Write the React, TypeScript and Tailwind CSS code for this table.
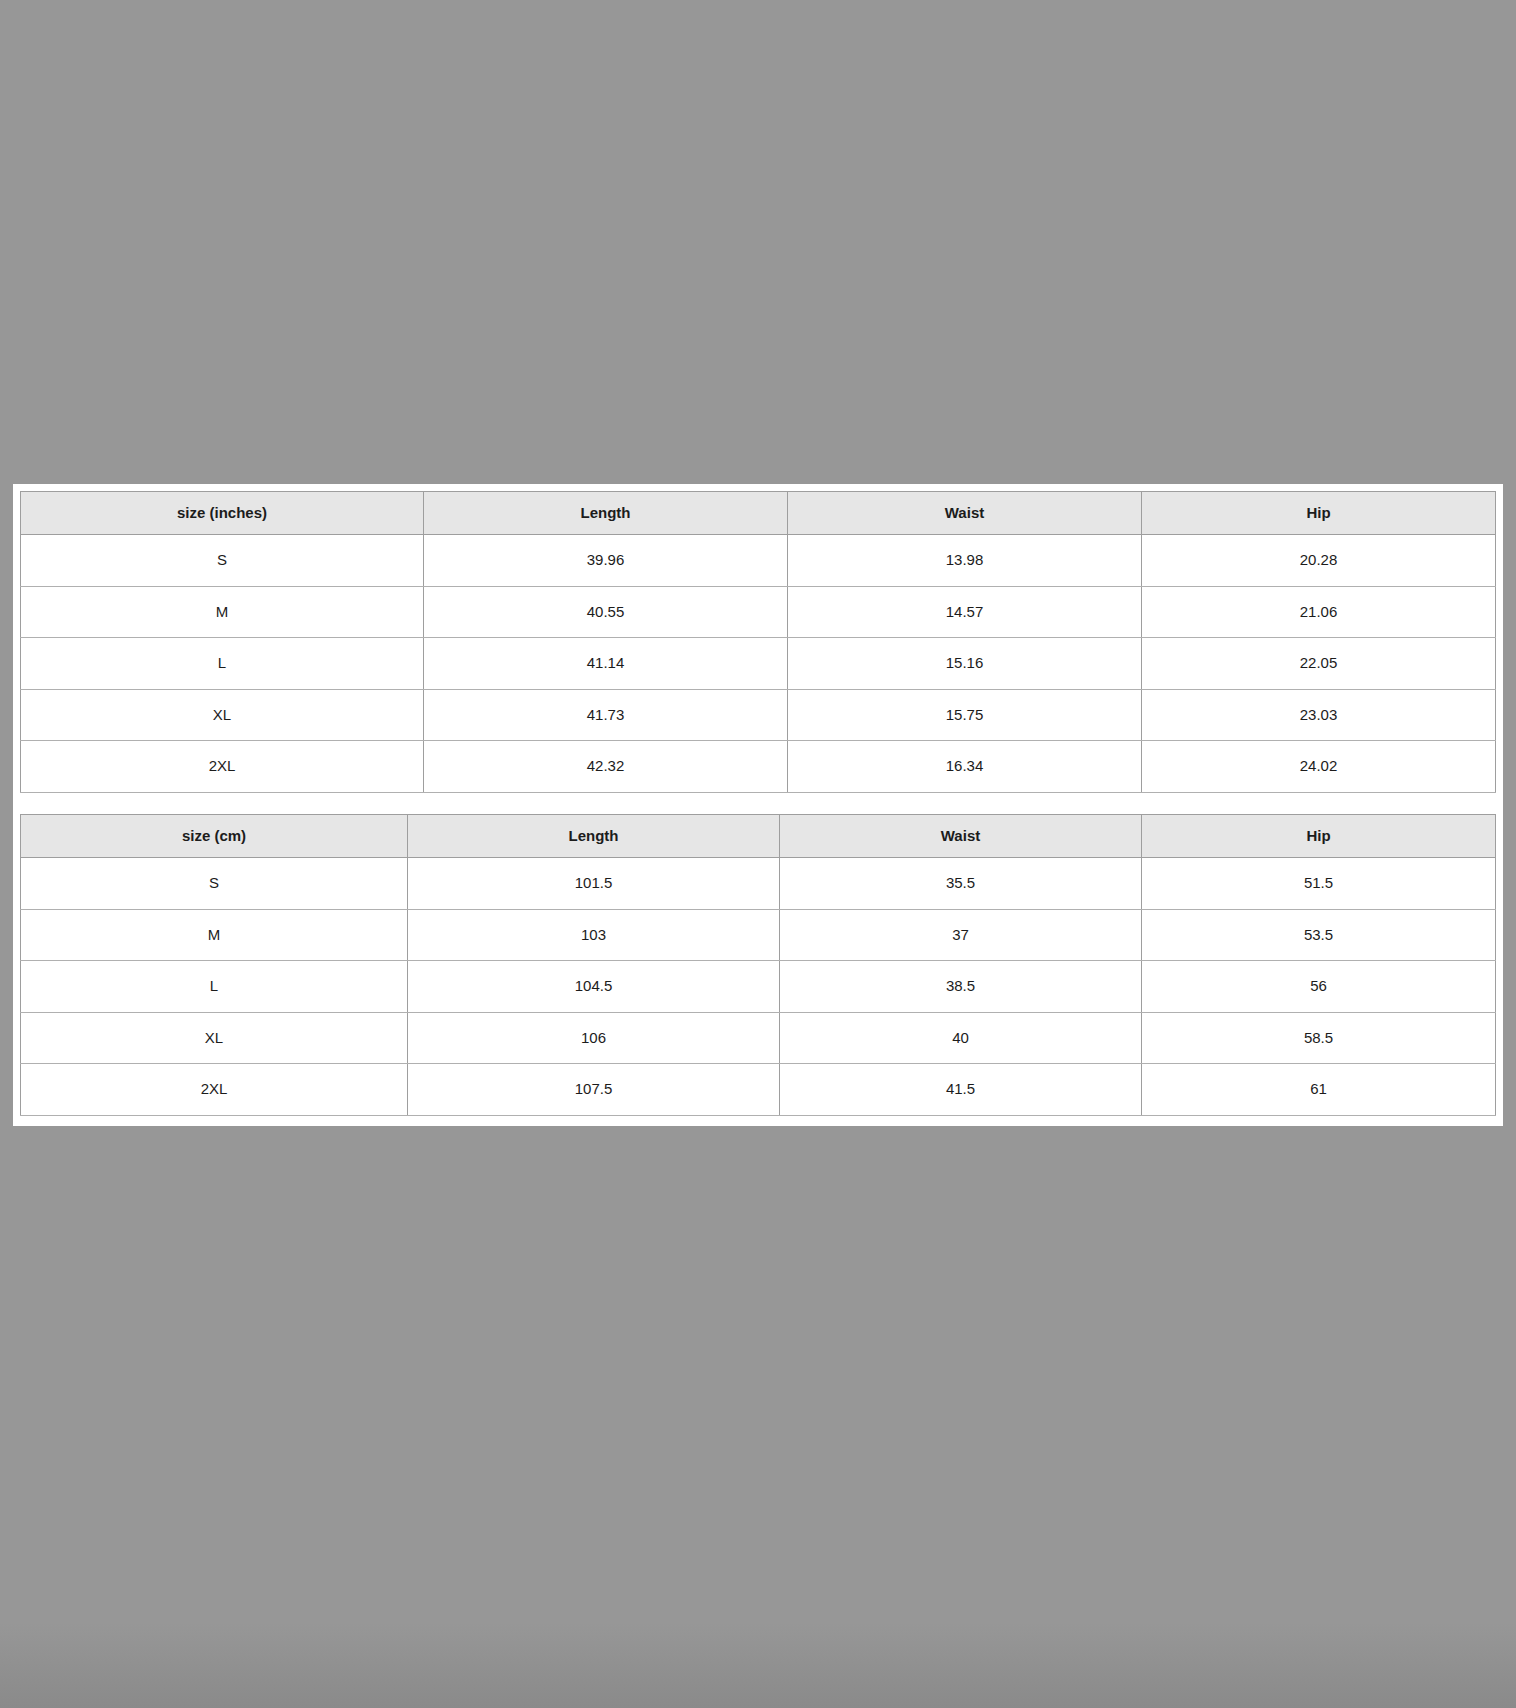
const inches = {
  title: "size (inches)",
  widths: ["w-[403px]", "w-[364px]", "w-[354px]", "w-[354px]"],
  rows: [
    ["S", "39.96", "13.98", "20.28"],
    ["M", "40.55", "14.57", "21.06"],
    ["L", "41.14", "15.16", "22.05"],
    ["XL", "41.73", "15.75", "23.03"],
    ["2XL", "42.32", "16.34", "24.02"],
  ],
};

const cm = {
  title: "size (cm)",
  widths: ["w-[387px]", "w-[372px]", "w-[362px]", "w-[354px]"],
  rows: [
    ["S", "101.5", "35.5", "51.5"],
    ["M", "103", "37", "53.5"],
    ["L", "104.5", "38.5", "56"],
    ["XL", "106", "40", "58.5"],
    ["2XL", "107.5", "41.5", "61"],
  ],
};

type SizeTable = typeof inches;

function SizeChart({ table }: { table: SizeTable }) {
  const headers = [table.title, "Length", "Waist", "Hip"];
  return (
    <table className="w-[1475px] table-fixed border-collapse border border-[#9e9e9e] text-center text-[15px] text-[#1c1c1c]">
      <thead>
        <tr className="h-[43px] bg-[#e6e6e6]">
          {headers.map((label, i) => (
            <th className={`${table.widths[i]} border border-[#9e9e9e] font-bold`} key={label}>
              {label}
            </th>
          ))}
        </tr>
      </thead>
      <tbody>
        {table.rows.map((row) => (
          <tr className="h-[51.6px]" key={row[0]}>
            {row.map((cell, i) => (
              <td className="border border-[#b0b0b0] border-x-[#9e9e9e]" key={i}>
                {cell}
              </td>
            ))}
          </tr>
        ))}
      </tbody>
    </table>
  );
}

export default function App() {
  return (
    <div className="flex h-[1708px] flex-col bg-[linear-gradient(to_bottom,#979797_0%,#979797_95%,#8a8a8a_100%)] pt-[484px] font-['Liberation_Sans',Arial,sans-serif]">
      <div className="ml-[13px] flex w-[1490px] flex-col gap-[21px] bg-white pb-[10px] pl-[7px] pr-[8px] pt-[7px]">
        <SizeChart table={inches} />
        <SizeChart table={cm} />
      </div>
    </div>
  );
}
